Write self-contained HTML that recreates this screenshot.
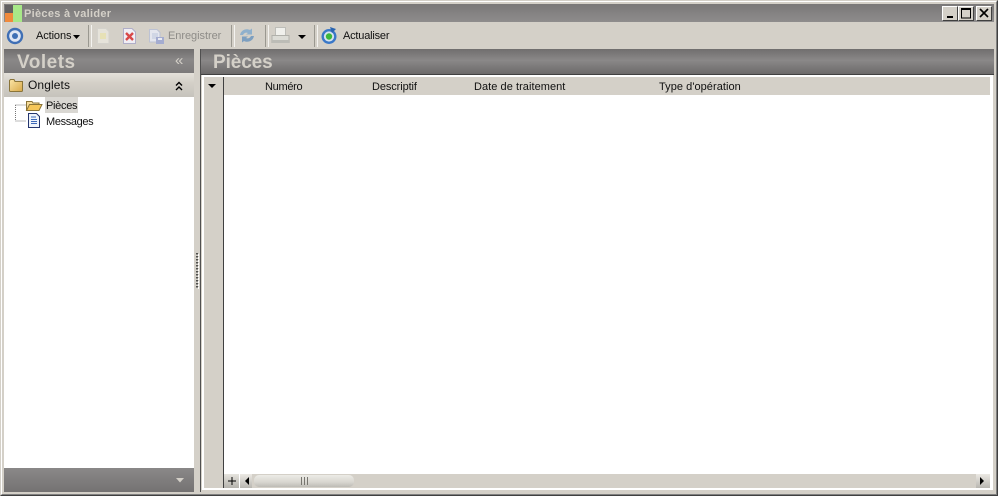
<!DOCTYPE html>
<html lang="fr"><head><meta charset="utf-8"><title>Pièces à valider</title>
<style>
html,body{margin:0;padding:0;width:998px;height:496px;overflow:hidden;background:#d4d0c8;font-family:"Liberation Sans",sans-serif;font-size:11px;color:#111}
.a{position:absolute;box-sizing:border-box}
.t{position:absolute;white-space:nowrap;line-height:14px}
svg{position:absolute;overflow:visible}
.sep{position:absolute;top:25px;width:2px;height:22px;border-left:1px solid #9a9890;border-right:1px solid #f4f3f0}
.bt{position:absolute;top:6px;height:15px;width:16px;background:#d4d0c8;border:1px solid;border-color:#fff #404040 #404040 #fff;box-sizing:border-box}
</style></head><body>
<div class="a" style="left:0;top:0;width:998px;height:496px;border:1px solid;border-color:#d4d0c8 #404040 #404040 #d4d0c8"></div>
<div class="a" style="left:1px;top:1px;width:996px;height:494px;border:1px solid;border-color:#fff #808080 #808080 #fff"></div>
<div class="a" style="left:4px;top:4px;width:990px;height:18px;background:linear-gradient(#7a7878,#8e8c8c)"></div>
<svg style="left:0;top:0" width="30" height="24"><rect x="5" y="5" width="8" height="8" fill="#626060"/><rect x="5" y="13" width="8" height="9" fill="#f08a3c"/><rect x="13" y="5" width="9" height="17" fill="#a8e888"/></svg>
<div class="t" style="left:24px;top:7px;color:#d4d0c8;font-weight:bold;font-size:11px;letter-spacing:.3px">Pièces à valider</div>
<div class="bt" style="left:942px"><svg style="left:4px;top:9px" width="8" height="3"><rect width="6" height="2" fill="#000"/></svg></div>
<div class="bt" style="left:958px"><svg style="left:2px;top:1px" width="12" height="12"><rect x=".5" y="1" width="9" height="9" fill="none" stroke="#000"/><rect x="0" y="0" width="10" height="2" fill="#000"/></svg></div>
<div class="bt" style="left:976px"><svg style="left:3px;top:2px" width="10" height="10"><path d="M0 0L8 8M8 0L0 8" stroke="#000" stroke-width="1.6"/></svg></div>

<svg style="left:6px;top:27px" width="18" height="18"><circle cx="9" cy="9" r="7" fill="#dfe6f4" stroke="#3f6fb5" stroke-width="2.4"/><circle cx="9" cy="9" r="3" fill="#3f6fb5"/></svg>
<div class="t" style="left:36px;top:29px;letter-spacing:-.1px">Actions</div>
<svg style="left:73px;top:35px" width="8" height="5"><path d="M0 0H7L3.500 4Z" fill="#000"/></svg>
<div class="sep" style="left:88px"></div>
<svg style="left:95px;top:28px" width="16" height="17"><path d="M2.500 .5H11L14 3.500V15.500H2.500Z" fill="#e6e3da" stroke="#d4d2cc"/><path d="M5 6H11M5 8H11M5 10H11" stroke="#e8e0a0" stroke-width="1.200"/></svg>
<svg style="left:122px;top:28px" width="16" height="17"><path d="M1.500 .5H10L13.500 4V15.500H1.500Z" fill="#f0eef4" stroke="#b0aec8"/><path d="M4 5L11 12M11 5L4 12" stroke="#d84848" stroke-width="2.400"/></svg>
<svg style="left:148px;top:28px" width="18" height="18"><path d="M1.500 1.500H9L12 4.500V14H1.500Z" fill="#e4e6ee" stroke="#bcc2d4"/><path d="M4 6H10M4 8H10M4 10H10" stroke="#bcc6dc"/><rect x="8" y="9" width="8" height="7" fill="#a4acd0"/><rect x="10" y="10" width="4" height="2" fill="#e8eaf2"/></svg>
<div class="t" style="left:168px;top:29px;color:#8e8c88;letter-spacing:-.05px">Enregistrer</div>
<div class="sep" style="left:231px"></div>
<svg style="left:238px;top:27px" width="18" height="18"><path d="M2 8C3 3 8 1 12 3L14 1.500V7.500H8L10 6C8 5 6 6 5 8Z" fill="#8fb0cc"/><path d="M16 9C15 14 10 16 6 14L4 15.500V9.500H10L8 11C10 12 12 11 13 9Z" fill="#7d9fc0"/></svg>
<div class="sep" style="left:265px"></div>
<svg style="left:271px;top:26px" width="20" height="20"><rect x="4.500" y="1.500" width="10" height="8" fill="#f0f0ec" stroke="#bdbdb8"/><path d="M1 9.500H18V16.500H1Z" fill="#dcdcd6" stroke="#b0b0aa"/><rect x="1" y="14" width="17" height="3" fill="#bcbcb6"/></svg>
<svg style="left:298px;top:35px" width="9" height="5"><path d="M0 0H8L4 4Z" fill="#000"/></svg>
<div class="sep" style="left:314px"></div>
<svg style="left:320px;top:27px" width="18" height="18"><circle cx="9" cy="9.500" r="6.300" fill="#d8e4ee" stroke="#3a78c8" stroke-width="2.400"/><circle cx="9" cy="9.500" r="3.200" fill="#3cb83c"/><path d="M10 0L16 2L12 6Z" fill="#2a64b0"/></svg>
<div class="t" style="left:343px;top:29px;letter-spacing:-.2px">Actualiser</div>

<div class="a" style="left:4px;top:49px;width:190px;height:24px;background:linear-gradient(#706e6e,#8a8888 45%,#7c7a7a)"></div>
<div class="t" style="left:17px;top:52px;font-size:19px;line-height:22px;font-weight:bold;letter-spacing:.5px;color:#d4d0c8">Volets</div>
<div class="t" style="left:175px;top:54px;font-size:15px;color:#d4d0c8">«</div>
<div class="a" style="left:4px;top:73px;width:190px;height:24px;background:linear-gradient(#e4e1da,#d4d0c8 40%,#c6c3bc)"></div>
<svg style="left:9px;top:78px" width="15" height="14"><defs><linearGradient id="g" x1="0" y1="0" x2="1" y2="1"><stop offset="0" stop-color="#fbe6a8"/><stop offset="1" stop-color="#d8a848"/></linearGradient></defs><path d="M.5 2.500V12.500C.5 13 1 13.500 1.500 13.500H12.500C13.200 13.500 13.500 13 13.500 12.500V3.500H6L5 1.500H1.500Z" fill="url(#g)" stroke="#8a7438"/></svg>
<div class="t" style="left:28px;top:78px;font-size:12px;letter-spacing:.1px">Onglets</div>
<svg style="left:175px;top:81px" width="9" height="11"><path d="M1 4.500L4 1.500L7 4.500M1 9L4 6L7 9" fill="none" stroke="#000" stroke-width="1.400"/></svg>
<div class="a" style="left:4px;top:97px;width:190px;height:371px;background:#fff"></div>
<svg style="left:15px;top:104px" width="16" height="20"><path d="M.5 1V17M.5 1H11M.5 17H11" stroke="#777" stroke-dasharray="1 1" fill="none"/></svg>
<svg style="left:26px;top:99px" width="17" height="13"><path d="M.5 11.500V2.500H6L7 4H13V6" fill="#f6dc9a" stroke="#8a7438"/><path d="M.5 11.500L3.500 5.500H16L13 11.500Z" fill="#f5c65a" stroke="#8a7438"/></svg>
<div class="a" style="left:45px;top:97px;width:33px;height:16px;background:#d9d7d2"></div>
<div class="t" style="left:46px;top:99px;letter-spacing:-.3px">Pièces</div>
<svg style="left:28px;top:113px" width="13" height="15"><path d="M.5 .5H8.500L11.500 3.500V14.500H.5Z" fill="#eef3fb" stroke="#24356e"/><path d="M3 4H8M3 6.500H9M3 8.500H9M3 10.500H9" stroke="#3c68b8"/></svg>
<div class="t" style="left:46px;top:115px;letter-spacing:-.35px">Messages</div>
<div class="a" style="left:4px;top:468px;width:190px;height:24px;background:linear-gradient(#8a8888,#747272)"></div>
<svg style="left:176px;top:478px" width="9" height="6"><path d="M0 0H8L4 4.500Z" fill="#d4d0c8"/></svg>

<div class="a" style="left:194px;top:49px;width:7px;height:443px;background:#d4d0c8"></div>
<div class="a" style="left:200px;top:49px;width:1px;height:443px;background:#505050"></div>
<svg style="left:196px;top:253px" width="3" height="36"><path d="M2.500 1V36" stroke="#fff" stroke-width="1" stroke-dasharray="2 1"/><path d="M1 0V36" stroke="#222" stroke-width="1.500" stroke-dasharray="1.500 1.500"/></svg>

<div class="a" style="left:201px;top:49px;width:793px;height:25px;background:linear-gradient(#706e6e,#8a8888 45%,#6c6a6a)"></div>
<div class="t" style="left:213px;top:52px;font-size:19px;line-height:22px;font-weight:bold;letter-spacing:-.1px;color:#d4d0c8">Pièces</div>
<div class="a" style="left:201px;top:74px;width:793px;height:1px;background:#404040"></div>
<div class="a" style="left:202px;top:75px;width:791px;height:415px;background:#fff"></div>
<div class="a" style="left:204px;top:77px;width:19px;height:411px;background:#d4d0c8"></div>
<div class="a" style="left:223px;top:77px;width:1px;height:411px;background:#404040"></div>
<div class="a" style="left:224px;top:77px;width:766px;height:18px;background:#d4d0c8"></div>
<svg style="left:208px;top:84px" width="9" height="5"><path d="M0 0H8L4 4Z" fill="#000"/></svg>
<div class="t" style="left:265px;top:80px;letter-spacing:-.3px">Numéro</div>
<div class="t" style="left:372px;top:80px;letter-spacing:-.1px">Descriptif</div>
<div class="t" style="left:474px;top:80px;letter-spacing:.05px">Date de traitement</div>
<div class="t" style="left:659px;top:80px;letter-spacing:.05px">Type d'opération</div>

<div class="a" style="left:224px;top:474px;width:766px;height:14px;background:#d4d0c8"></div>
<div class="a" style="left:224px;top:474px;width:15px;height:14px;background:linear-gradient(#e6e4de,#b4b2ac)"></div>
<svg style="left:228px;top:477px" width="9" height="9"><path d="M4 0V8M0 4H8" stroke="#000" stroke-width="1"/></svg>
<div class="a" style="left:239px;top:474px;width:13px;height:14px;background:linear-gradient(#ece9e4,#b8b6b0);border-left:1px solid #fff"></div>
<svg style="left:245px;top:477px" width="5" height="9"><path d="M4 0V8L0 4Z" fill="#000"/></svg>
<div class="a" style="left:254px;top:475px;width:100px;height:12px;border-radius:5px;background:linear-gradient(#ecebe6,#d8d6d0 60%,#bdbbb5)"></div>
<svg style="left:301px;top:477px" width="8" height="8"><path d="M.5 0V8M3.500 0V8M6.500 0V8" stroke="#77756f"/></svg>
<div class="a" style="left:976px;top:474px;width:14px;height:14px;background:linear-gradient(#ece9e4,#b8b6b0)"></div>
<svg style="left:980px;top:477px" width="5" height="9"><path d="M0 0V8L4 4Z" fill="#000"/></svg>
</body></html>
